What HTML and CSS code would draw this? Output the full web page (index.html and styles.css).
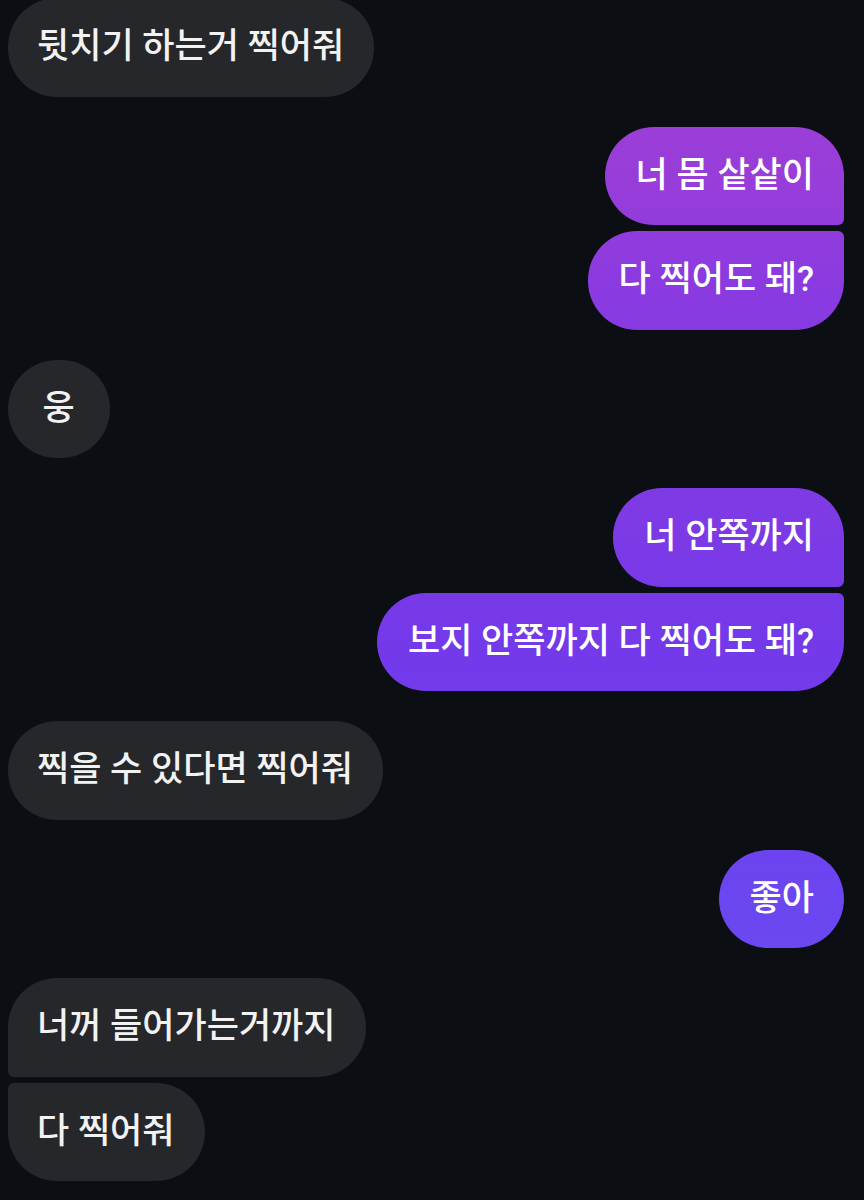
FILE: index.html
```html
<!DOCTYPE html>
<html lang="ko">
<head>
    <meta charset="UTF-8">
    <meta name="viewport" content="width=device-width, initial-scale=1.0">
    <title>메시지</title>
    <link rel="stylesheet" href="styles.css">
</head>
<body>

<main class="chat">
    <div class="group in">
        <div class="bubble">뒷치기 하는거 찍어줘</div>
    </div>

    <div class="group out">
        <div class="bubble">너 몸 샅샅이</div>
        <div class="bubble">다 찍어도 돼?</div>
    </div>

    <div class="group in">
        <div class="bubble">웅</div>
    </div>

    <div class="group out">
        <div class="bubble">너 안쪽까지</div>
        <div class="bubble">보지 안쪽까지 다 찍어도 돼?</div>
    </div>

    <div class="group in">
        <div class="bubble">찍을 수 있다면 찍어줘</div>
    </div>

    <div class="group out">
        <div class="bubble">좋아</div>
    </div>

    <div class="group in">
        <div class="bubble">너꺼 들어가는거까지</div>
        <div class="bubble">다 찍어줘</div>
    </div>
</main>

</body>
</html>
```

FILE: styles.css
```css
html, body {
    margin: 0;
    height: 1200px;
    overflow: hidden;
    background-color: #0b0e13;
}
body {
    font-family: Roboto, "Noto Sans CJK KR", sans-serif;
    color: #ffffff;
}
.chat {
    display: flex;
    flex-direction: column;
    gap: 30px;
    padding: 0 20px 0 8px;
    margin-top: -2px;
}
.group {
    display: flex;
    flex-direction: column;
    gap: 6px;
}
.group.in {
    align-items: flex-start;
}
.group.out {
    align-items: flex-end;
}
.bubble {
    box-sizing: border-box;
    min-width: 102px;
    padding: 26px 30px 26px 29px;
    font-size: 35px;
    font-weight: 500;
    line-height: 46.5px;
    text-align: center;
    border-radius: 49px;
    white-space: nowrap;
}
.in .bubble {
    background-color: #25272b;
    color: #f2f2f2;
}
/* gradient follows the screen, like the app does */
.out .bubble {
    padding-left: 31px;
    background-image: linear-gradient(to bottom, #a43fd4 0px, #983dd9 180px, #8a3ae1 290px, #7c3ae6 540px, #7339ea 650px, #6b46f1 900px, #6450f4 1200px);
    background-attachment: fixed;
}
.in .bubble:not(:last-child) {
    border-bottom-left-radius: 6px;
}
.in .bubble:not(:first-child) {
    border-top-left-radius: 6px;
}
.out .bubble:not(:last-child) {
    border-bottom-right-radius: 6px;
}
.out .bubble:not(:first-child) {
    border-top-right-radius: 6px;
}
```
